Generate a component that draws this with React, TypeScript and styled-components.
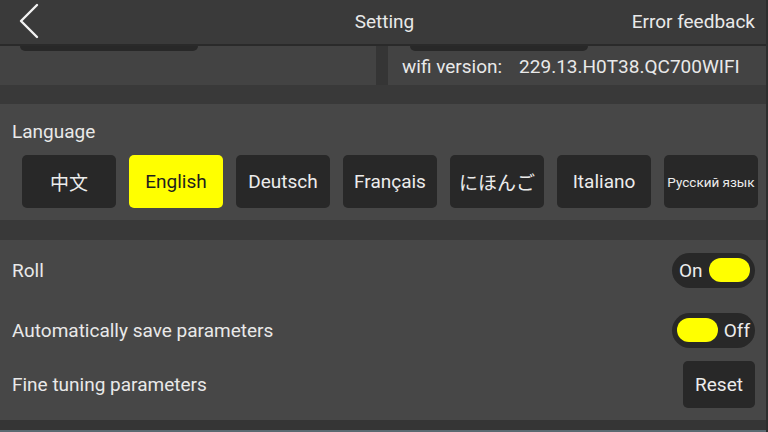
import React, { useState } from 'react';
import styled, { createGlobalStyle } from 'styled-components';

const GlobalStyle = createGlobalStyle`
  html, body {
    margin: 0;
    padding: 0;
    background: #393939;
  }
  body {
    font-family: Roboto, "Noto Sans", "Noto Sans CJK SC", sans-serif;
    color: #e9e9e9;
  }
  * { box-sizing: border-box; }
`;

const Page = styled.div`
  width: 768px;
  height: 432px;
  overflow: hidden;
  display: flex;
  flex-direction: column;
  background: #393939;
  border-right: 2px solid #2e2e2e;
`;

const Header = styled.header`
  height: 46px;
  flex-shrink: 0;
  display: grid;
  grid-template-columns: 1fr auto 1fr;
  align-items: center;
  padding: 0 11px 2px 18px;
  background: #3a3a3a;
  border-bottom: 2px solid #2a2a2a;
  font-size: 19px;
`;

const BackButton = styled.button`
  justify-self: start;
  background: none;
  border: none;
  padding: 0;
  width: 22px;
  height: 36px;
  cursor: pointer;
  display: flex;
  align-items: center;
`;

const Title = styled.div`
  margin-left: -4px;
`;

const HeaderAction = styled.div`
  justify-self: end;
`;

const InfoRow = styled.div`
  height: 39px;
  flex-shrink: 0;
  display: grid;
  grid-template-columns: 376px 1fr;
  column-gap: 12px;
  background: #353535;
  margin-bottom: 19px;
`;

const InfoCard = styled.div`
  position: relative;
  background: #434343;
  display: flex;
  align-items: center;
  padding: 2px 14px 0;
  font-size: 19px;
`;

/* bottom edge of a button that has scrolled under the header */
const HiddenButtonEdge = styled.div<{ $left: number }>`
  position: absolute;
  top: 0;
  left: ${p => p.$left}px;
  width: 178px;
  height: 5px;
  background: #282828;
  border-radius: 0 0 5px 5px;
`;

const VersionLabel = styled.span`
  margin-right: 17px;
`;

const Section = styled.section`
  flex-shrink: 0;
  background: #474747;
`;

const LanguageSection = styled(Section)`
  height: 116px;
  padding: 17px 9px 0 22px;
  margin-bottom: 20px;
`;

const SectionLabel = styled.div`
  font-size: 19px;
  line-height: 22px;
  margin-left: -10px;
`;

const LanguageGrid = styled.div`
  display: grid;
  grid-template-columns: repeat(7, 94px);
  column-gap: 13px;
  margin-top: 12px;
`;

const LangButton = styled.button<{ $active?: boolean; $small?: boolean }>`
  height: 53px;
  border: none;
  border-radius: 5px;
  padding: 0;
  cursor: pointer;
  background: ${p => (p.$active ? '#ffff00' : '#282828')};
  color: ${p => (p.$active ? '#1e1e1e' : '#ececec')};
  font-family: Roboto, "Noto Sans CJK SC", "Noto Sans CJK JP", sans-serif;
  font-size: ${p => (p.$small ? '13.5px' : '19px')};
  white-space: nowrap;
`;

const SettingsSection = styled(Section)`
  height: 180px;
  padding: 0 11px 12px 12px;
  display: flex;
  flex-direction: column;
`;

const SettingRow = styled.div<{ $height: number }>`
  height: ${p => p.$height}px;
  display: flex;
  align-items: center;
  justify-content: space-between;
  font-size: 19px;
`;

const Toggle = styled.button<{ $on: boolean }>`
  width: 83px;
  height: 35px;
  border: none;
  border-radius: 18px;
  background: #282828;
  color: #ececec;
  font-family: Roboto, sans-serif;
  font-size: 19px;
  display: flex;
  align-items: center;
  flex-direction: ${p => (p.$on ? 'row' : 'row-reverse')};
  justify-content: space-between;
  padding: ${p => (p.$on ? '0 5px 0 7px' : '0 5px 0 5px')};
  cursor: pointer;
`;

const Knob = styled.span`
  width: 41px;
  height: 24px;
  border-radius: 12px;
  background: #ffff00;
`;

const ResetButton = styled.button`
  width: 72px;
  height: 47px;
  border: none;
  border-radius: 5px;
  background: #282828;
  color: #ececec;
  font-family: Roboto, sans-serif;
  font-size: 19px;
  cursor: pointer;
`;

const Footer = styled.div`
  flex: 1;
  background: #353535;
  border-bottom: 2px solid #5b6a72;
`;

const languages = [
  { label: '中文' },
  { label: 'English' },
  { label: 'Deutsch' },
  { label: 'Français' },
  { label: 'にほんご' },
  { label: 'Italiano' },
  { label: 'Русский язык', small: true },
];

export default function App() {
  const [lang, setLang] = useState('English');
  const [roll, setRoll] = useState(true);
  const [autoSave, setAutoSave] = useState(false);

  return (
    <>
      <GlobalStyle />
      <Page>
        <Header>
          <BackButton aria-label="Back">
            <svg width="22" height="36" viewBox="0 0 22 36" fill="none">
              <path d="M19 2 L3 18 L19 34" stroke="#f2f2f2" strokeWidth="2.4" strokeLinecap="round" strokeLinejoin="round" />
            </svg>
          </BackButton>
          <Title>Setting</Title>
          <HeaderAction>Error feedback</HeaderAction>
        </Header>

        <InfoRow>
          <InfoCard>
            <HiddenButtonEdge $left={20} />
          </InfoCard>
          <InfoCard>
            <HiddenButtonEdge $left={22} />
            <VersionLabel>wifi version:</VersionLabel>
            229.13.H0T38.QC700WIFI
          </InfoCard>
        </InfoRow>

        <LanguageSection>
          <SectionLabel>Language</SectionLabel>
          <LanguageGrid>
            {languages.map(l => (
              <LangButton
                key={l.label}
                $active={lang === l.label}
                $small={l.small}
                onClick={() => setLang(l.label)}
              >
                {l.label}
              </LangButton>
            ))}
          </LanguageGrid>
        </LanguageSection>

        <SettingsSection>
          <SettingRow $height={60}>
            Roll
            <Toggle $on={roll} onClick={() => setRoll(!roll)}>
              {roll ? 'On' : 'Off'}
              <Knob />
            </Toggle>
          </SettingRow>
          <SettingRow $height={60}>
            Automatically save parameters
            <Toggle $on={autoSave} onClick={() => setAutoSave(!autoSave)}>
              {autoSave ? 'On' : 'Off'}
              <Knob />
            </Toggle>
          </SettingRow>
          <SettingRow $height={48}>
            Fine tuning parameters
            <ResetButton>Reset</ResetButton>
          </SettingRow>
        </SettingsSection>

        <Footer />
      </Page>
    </>
  );
}
